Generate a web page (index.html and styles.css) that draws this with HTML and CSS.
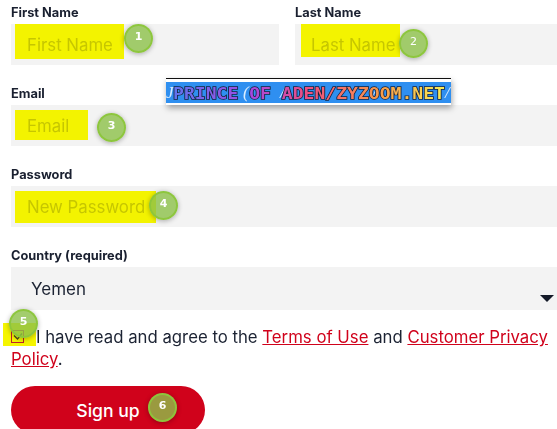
FILE: index.html
```html
<!DOCTYPE html>
<html lang="en">
<head>
    <meta charset="UTF-8">
    <title>Sign up</title>
    <link rel="stylesheet" href="styles.css">
</head>
<body>
    <form class="signup-form">
        <div class="name-row">
            <div class="field">
                <label class="field-label">First Name</label>
                <div class="input-wrap">
                    <input type="text" class="text-input" placeholder="First Name">
                    <span class="mark mark-first"></span>
                    <span class="badge badge-1">1</span>
                </div>
            </div>
            <div class="field">
                <label class="field-label">Last Name</label>
                <div class="input-wrap">
                    <input type="text" class="text-input" placeholder="Last Name">
                    <span class="mark mark-last"></span>
                    <span class="badge badge-2">2</span>
                </div>
            </div>
        </div>

        <div class="field">
            <label class="field-label">Email</label>
            <div class="input-wrap">
                <input type="text" class="text-input" placeholder="Email">
                <span class="mark mark-email"></span>
                <span class="badge badge-3">3</span>
            </div>
        </div>

        <div class="field">
            <label class="field-label">Password</label>
            <div class="input-wrap">
                <input type="text" class="text-input" placeholder="New Password">
                <span class="mark mark-password"></span>
                <span class="badge badge-4">4</span>
            </div>
        </div>

        <div class="field">
            <label class="field-label">Country (required)</label>
            <div class="input-wrap">
                <select class="country-select">
                    <option>Yemen</option>
                </select>
                <span class="select-arrow"></span>
            </div>
        </div>

        <div class="terms">
            <span class="mark mark-check"></span>
            <span class="checkbox">
                <svg width="10" height="9" viewBox="0 0 10 9"><path d="M1 3.5 L4.5 7 L9 1.5" fill="none" stroke="#4a4a22" stroke-width="1.3"/></svg>
            </span>
            <span class="badge badge-5">5</span>
            <p class="terms-text">I have read and agree to the <a href="#">Terms of Use</a> and <a href="#">Customer Privacy Policy</a>.</p>
        </div>

        <button type="button" class="signup-button">Sign up<span class="badge badge-6">6</span></button>
    </form>

    <!-- watermark strip over the form -->
    <div class="watermark">
        <svg width="285" height="21" viewBox="0 0 285 21">
            <defs>
                <linearGradient id="rainbow" x1="0" y1="0" x2="285" y2="0" gradientUnits="userSpaceOnUse">
                    <stop offset="0" stop-color="#5a78f0"/>
                    <stop offset="0.3" stop-color="#a548e0"/>
                    <stop offset="0.5" stop-color="#f04f80"/>
                    <stop offset="0.75" stop-color="#f89a48"/>
                    <stop offset="1" stop-color="#f8f458"/>
                </linearGradient>
            </defs>
            <text class="wm-swash" y="16"><tspan x="0">J</tspan><tspan x="77">(</tspan><tspan x="114">/</tspan><tspan x="206">/</tspan><tspan x="279">/</tspan></text>
            <text class="wm-text" x="7" y="17" textLength="272" lengthAdjust="spacingAndGlyphs" fill="url(#rainbow)">PRINCE OF ADEN/ZYZOOM.NET</text>
        </svg>
    </div>
</body>
</html>
```

FILE: styles.css
```css
* {
    margin: 0;
    padding: 0;
    box-sizing: border-box;
}

html, body {
    height: 100%;
    overflow: hidden;
}

body {
    font-family: Inter, 'Open Sans', sans-serif;
    background-color: white;
    color: #1c2333;
    position: relative;
}

.signup-form {
    display: flex;
    flex-direction: column;
    gap: 20px;
    padding: 4px 0 0 11px;
}

.name-row {
    display: grid;
    grid-template-columns: 268px 1fr;
    gap: 16px;
}

.field-label {
    display: block;
    height: 16px;
    margin-bottom: 4px;
    font-size: 12.8px;
    line-height: 18px;
    font-weight: 700;
    color: #1a2030;
}

.input-wrap {
    position: relative;
}

.text-input {
    display: block;
    width: 100%;
    height: 41px;
    padding: 0 16px;
    border: none;
    background-color: #f3f3f3;
    font-family: inherit;
    font-size: 16.8px;
}

.text-input::placeholder {
    color: #c6c6c6;
    opacity: 1;
}

.country-select {
    display: block;
    width: 100%;
    height: 43px;
    padding: 0 20px;
    border: none;
    border-radius: 0;
    appearance: none;
    background-color: #f3f3f3;
    color: #1c2333;
    font-family: inherit;
    font-size: 17px;
}

.select-arrow {
    position: absolute;
    right: 3px;
    top: 28px;
    border-left: 7px solid transparent;
    border-right: 7px solid transparent;
    border-top: 7px solid #141a28;
}

.mark {
    position: absolute;
    background-color: #f5f500;
    mix-blend-mode: darken;
}

.mark-first { left: 4px; top: 0; width: 109px; height: 35px; }
.mark-last { left: 6px; top: 0; width: 99px; height: 33px; }
.mark-email { left: 4px; top: 5px; width: 73px; height: 30px; }
.mark-password { left: 4px; top: 5px; width: 141px; height: 32px; }
.mark-check { left: -8px; top: -3px; width: 33px; height: 23px; }

.badge {
    position: absolute;
    width: 29px;
    height: 29px;
    border: 2px solid rgba(140, 198, 60, 0.95);
    border-radius: 50%;
    background-color: rgba(140, 192, 73, 0.8);
    box-shadow: 0 1px 5px rgba(0, 0, 0, 0.3);
    color: white;
    font-family: 'DejaVu Sans', sans-serif;
    font-size: 11px;
    font-weight: 700;
    line-height: 22px;
    text-align: center;
}

.badge-1 { left: 113px; top: 0; }
.badge-2 { left: 104px; top: 5px; font-weight: 400; }
.badge-3 { left: 86px; top: 8px; }
.badge-4 { left: 138px; top: 5px; }
.badge-5 { left: -2px; top: -17px; }
.badge-6 { left: 137px; top: 7px; }

.terms {
    position: relative;
    margin-top: -4px;
}

.terms-text {
    font-size: 16.75px;
    line-height: 22px;
    text-indent: 25px;
}

.terms-text a {
    color: #d0021b;
}

.checkbox {
    position: absolute;
    left: 0;
    top: 4px;
    width: 13px;
    height: 13px;
    border: 1px solid #c0202a;
    display: flex;
    align-items: center;
    justify-content: center;
}

.signup-button {
    position: relative;
    width: 194px;
    height: 48px;
    margin-top: -4px;
    border: none;
    border-radius: 24px;
    background-color: #d0021b;
    color: white;
    font-family: inherit;
    font-size: 17.6px;
    font-weight: 500;
}

.watermark {
    position: absolute;
    left: 166px;
    top: 78px;
    width: 285px;
    height: 27px;
    padding-top: 3px;
    background-color: white;
    border-top: 1px solid #111;
    box-shadow: 1px 3px 6px rgba(0, 0, 0, 0.35);
}

.watermark svg {
    display: block;
    background-color: #2f8ff0;
}

.wm-text {
    font-family: 'DejaVu Sans Mono', monospace;
    font-size: 15px;
    font-weight: 700;
    stroke: #14203a;
    stroke-width: 1.4px;
    paint-order: stroke;
}

.wm-swash {
    font-family: 'Liberation Serif', serif;
    font-size: 17px;
    font-style: italic;
    fill: #d8ecff;
}
```
